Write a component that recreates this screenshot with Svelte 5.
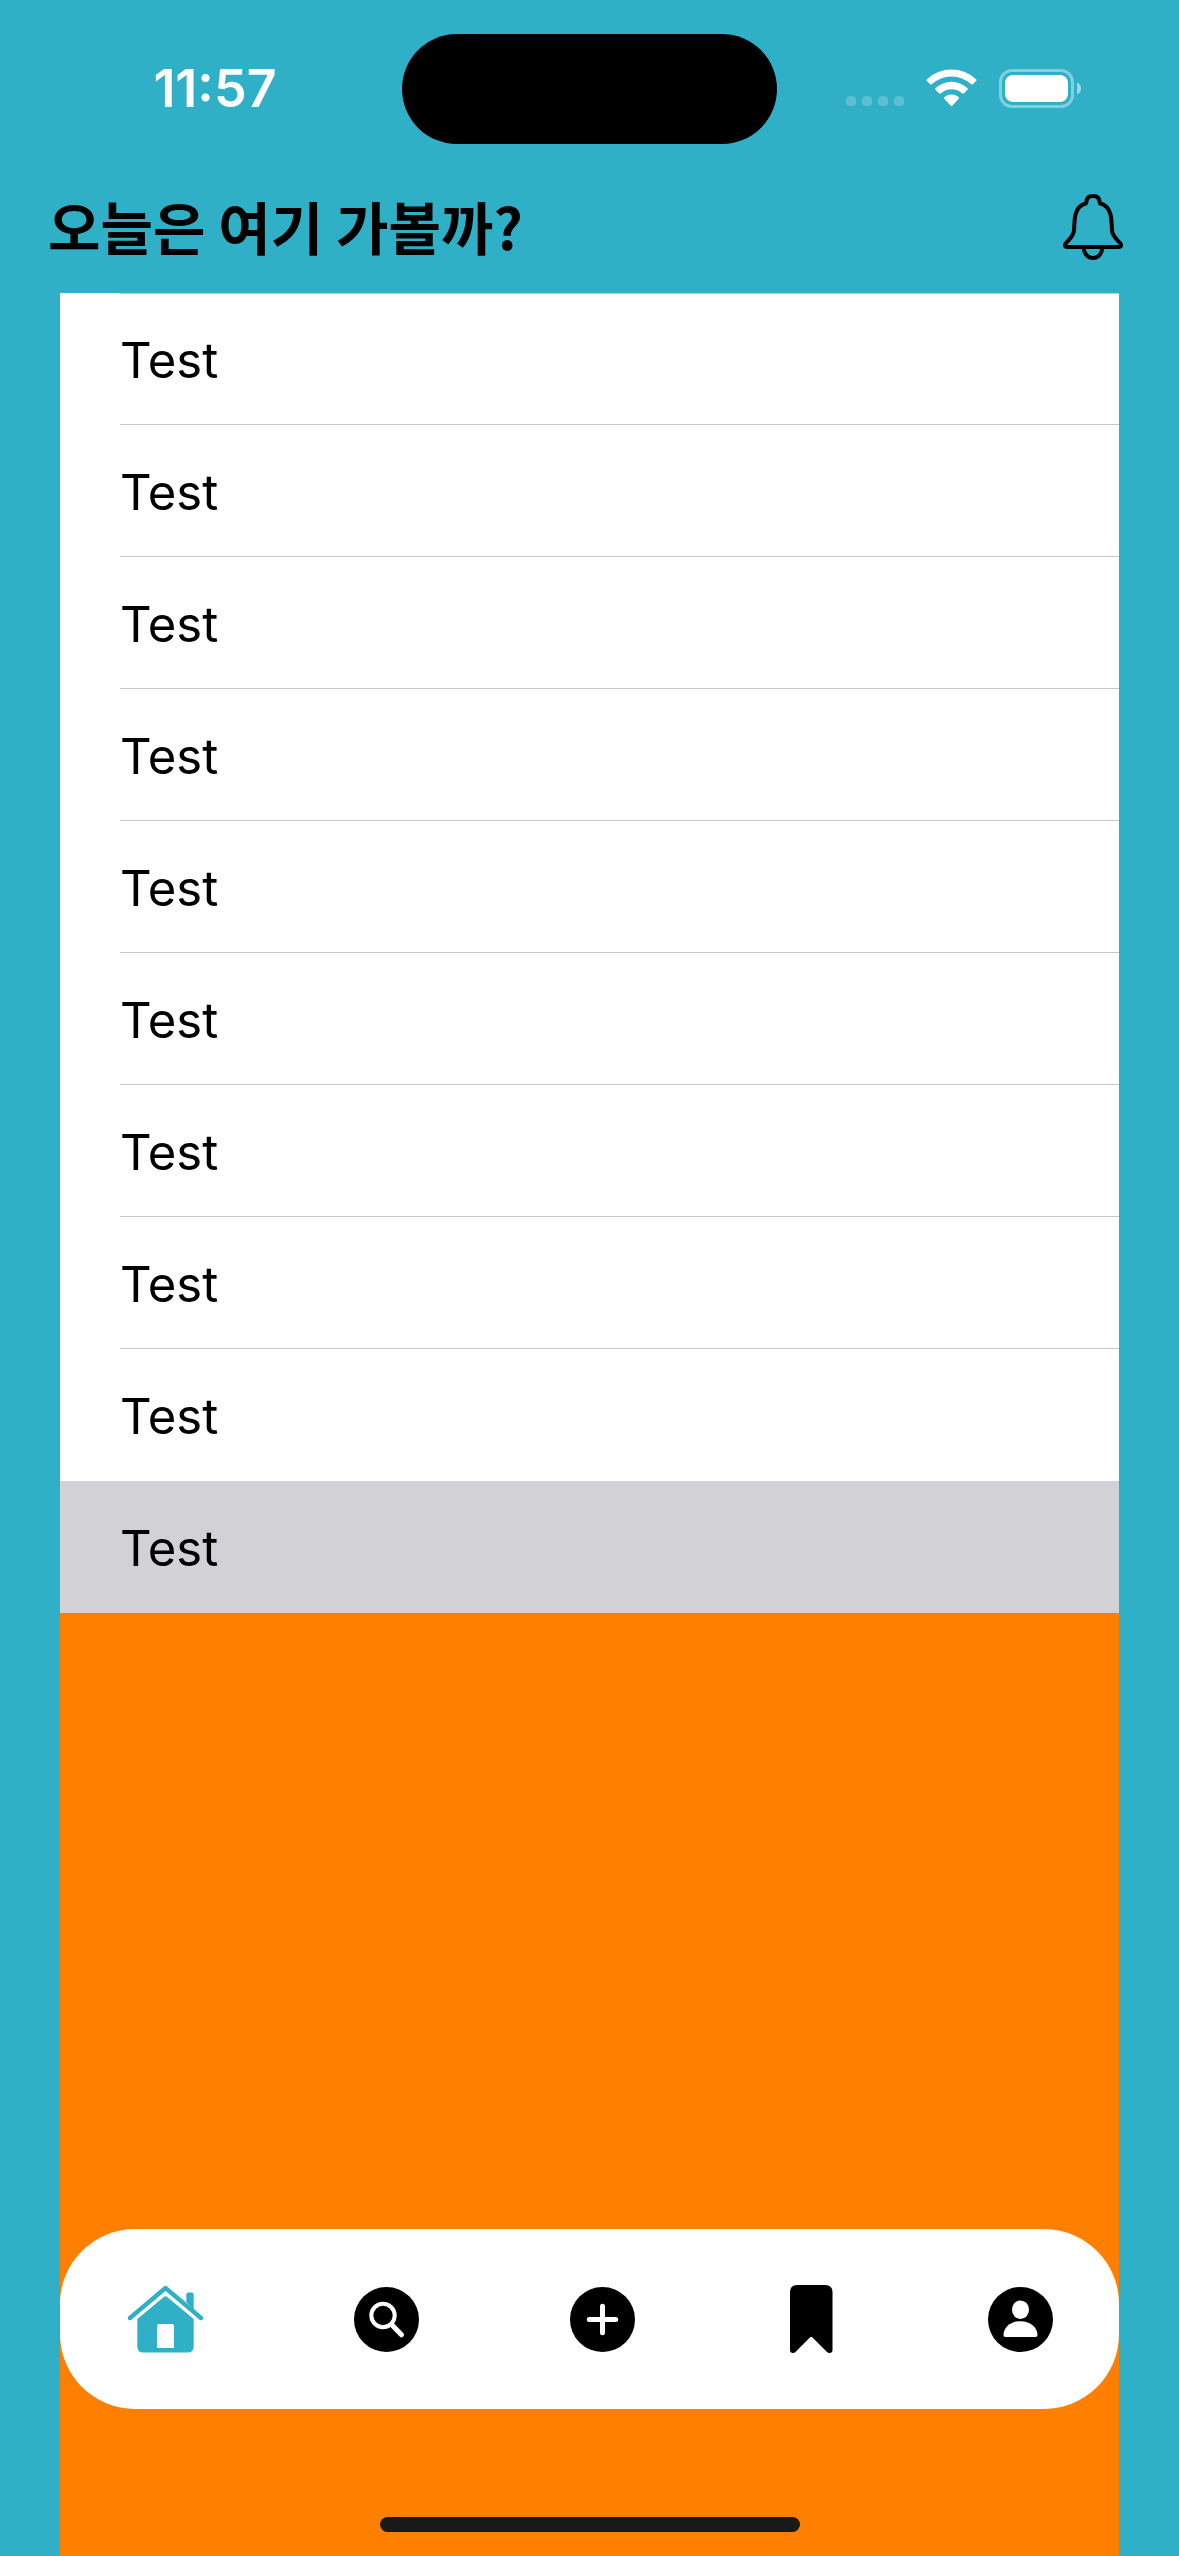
<script>
  let rows = $state(Array.from({ length: 10 }, (_, id) => ({ id, label: 'Test' })));
  let selected = $state(9);
</script>

<div class="screen">
  <div class="status">
    <div class="side left"><time>11:57</time></div>
    <div class="island"></div>
    <div class="side right">
      <svg class="dots" width="58" height="38" viewBox="0 0 58 38" aria-hidden="true">
        <rect x="0" y="27" width="10" height="10" rx="4" />
        <rect x="16" y="27" width="10" height="10" rx="4" />
        <rect x="32" y="27" width="10" height="10" rx="4" />
        <rect x="48" y="27" width="10" height="10" rx="4" />
      </svg>
      <svg class="wifi" width="51" height="38" viewBox="0 0 51 38" aria-hidden="true">
        <path d="M1 10.2 A36 36 0 0 1 50 10.2 Q51 11.2 50 12.1 L47 15.1 Q46 16 45 15.1 A28.6 28.6 0 0 0 6 15.1 Q5 16 4 15.1 L1 12.1 Q0 11.2 1 10.2Z" />
        <path d="M9.6 19 A23.4 23.4 0 0 1 41.4 19 Q42.3 19.900 41.400 20.800 L38 24.200 Q37 25.100 36 24.300 A16 16 0 0 0 15 24.300 Q14 25.100 13 24.200 L9.600 20.800 Q8.700 19.900 9.600 19Z" />
        <path d="M18.500 28 A11.500 11.500 0 0 1 32.500 28 Q33.500 29 32.500 30 L26.500 36.600 Q25.500 37.500 24.500 36.600 L18.500 30 Q17.500 29 18.500 28Z" />
      </svg>
      <svg class="battery" width="82" height="39" viewBox="0 0 82 39" aria-hidden="true">
        <rect class="shell" x="1.500" y="1.500" width="72" height="36" rx="11.500" />
        <rect x="6" y="6" width="63" height="27" rx="8" />
        <path class="nub" d="M78 13.500 Q82 15 82 19.500 Q82 24 78 25.500Z" />
      </svg>
    </div>
  </div>

  <header>
    <h1>오늘은 여기 가볼까?</h1>
    <button class="bell" aria-label="알림">
      <svg width="60" height="67" viewBox="0 0 60 67" aria-hidden="true">
        <path d="M4.500 53 H55.500 C59 53 58.500 50.500 56.500 48.500 C53 44.500 49.500 42 49 36.500 C48.500 31 49 26.500 47.500 20.500 C46 14.500 42.500 10.800 36.800 9.300 C36.800 4.500 34.500 2 30 2 S23.200 4.500 23.200 9.300 C17.500 10.800 14 14.500 12.500 20.500 C11 26.500 11.500 31 11 36.500 C10.500 42 7 44.500 3.500 48.500 C1.500 50.500 1 53 4.500 53Z" />
        <path d="M20.800 54 A9.200 10 0 0 0 39.200 54" />
      </svg>
    </button>
  </header>

  <main>
    <ul>
      {#each rows as row (row.id)}
        <li class:selected={row.id === selected}>
          <button class="row" onclick={() => (selected = row.id)}><span>{row.label}</span></button>
        </li>
      {/each}
    </ul>

    <nav>
      <button class="active" aria-label="홈">
        <svg width="75" height="68" viewBox="0 0 75 68" aria-hidden="true">
          <path d="M2 33 L37.500 3 L73 33" fill="none" stroke="currentColor" stroke-width="4.400" stroke-linecap="round" stroke-linejoin="round" />
          <path d="M58.300 17 V9.500 Q58.300 7.500 60.300 7.500 H63.700 Q65.700 7.500 65.700 9.500 V25Z" />
          <path fill-rule="evenodd" d="M9.300 34 L35.800 12 Q37.500 10.700 39.200 12 L65.700 34 V61.500 Q65.700 67.500 59.700 67.500 H15.300 Q9.300 67.500 9.300 61.500Z M31 39 Q29 39 29 41 V63 H46 V41 Q46 39 44 39Z" />
        </svg>
      </button>
      <button aria-label="검색">
        <svg width="65" height="68" viewBox="0 0 65 68" aria-hidden="true">
          <circle cx="32.500" cy="34.500" r="32.500" />
          <g class="cut">
            <circle cx="29" cy="30.500" r="11.700" />
            <path d="M38 40 L47.500 49.800" stroke-width="5" />
          </g>
        </svg>
      </button>
      <button aria-label="추가">
        <svg width="65" height="68" viewBox="0 0 65 68" aria-hidden="true">
          <circle cx="32.500" cy="34.500" r="32.500" />
          <path class="cut plus" d="M32.500 21.300 V47.700 M19.300 34.500 H45.700" />
        </svg>
      </button>
      <button aria-label="저장됨">
        <svg width="51" height="68" viewBox="0 0 51 68" aria-hidden="true">
          <path d="M4 7.500 Q4 0 11.500 0 H39 Q46.500 0 46.500 7.500 V65 Q46.500 68 43.500 68 Q42 68 41 67 L26.500 52.500 Q25.200 51.200 23.900 52.500 L9.500 67 Q8.500 68 7 68 Q4 68 4 65Z" />
        </svg>
      </button>
      <button aria-label="프로필">
        <svg width="65" height="68" viewBox="0 0 65 68" aria-hidden="true">
          <circle cx="32.500" cy="34.500" r="32.500" />
          <ellipse cx="32.500" cy="24.700" rx="8.500" ry="9.300" fill="#fff" />
          <path d="M15.500 50 C15.500 43 22 36.200 32.500 36.200 S49.500 43 49.500 50 Q49.500 52 47.500 52 H17.500 Q15.500 52 15.500 50Z" fill="#fff" />
        </svg>
      </button>
    </nav>
    <div class="indicator"></div>
  </main>
</div>

<style>
  :global(body) {
    margin: 0;
    background: #30b0c7;
  }
  .screen {
    display: flex;
    flex-direction: column;
    min-height: 100vh;
    background: #30b0c7;
    color: #000;
    font-family: Inter, 'Noto Sans CJK KR', sans-serif;
  }
  button {
    margin: 0;
    padding: 0;
    border: 0;
    background: none;
    color: inherit;
    font: inherit;
    cursor: pointer;
  }
  svg {
    display: block;
    fill: currentColor;
  }

  .status {
    display: grid;
    grid-template-columns: 1fr 375px 1fr;
    align-items: center;
    padding: 34px 0 33px;
    color: #fff;
  }
  .island {
    height: 110px;
    border-radius: 55px;
    background: #000;
  }
  .side {
    display: flex;
    align-items: center;
    justify-content: center;
  }
  .left {
    padding-left: 28px;
  }
  .right {
    gap: 22px;
    padding: 0 30px 2px 0;
  }
  time {
    font-size: 52px;
    line-height: 60px;
    font-weight: 600;
  }
  .dots {
    opacity: 0.2;
  }
  .shell {
    fill: none;
    stroke: #fff;
    stroke-width: 3;
    opacity: 0.4;
  }
  .nub {
    opacity: 0.5;
  }

  header {
    display: flex;
    align-items: center;
    justify-content: space-between;
    padding: 0 56px 16px 48px;
  }
  h1 {
    margin: 0;
    padding-bottom: 4px;
    font-family: 'Noto Sans CJK KR', sans-serif;
    font-size: 57px;
    line-height: 96px;
    font-weight: 700;
  }
  .bell svg {
    fill: none;
    stroke: #000;
    stroke-width: 4;
    stroke-linejoin: round;
  }

  main {
    flex: 1;
    display: flex;
    flex-direction: column;
    margin: 0 60px;
    background: #ff8000;
  }
  ul {
    margin: 0;
    padding: 0;
    list-style: none;
    background: #fff;
  }
  li {
    padding-left: 60px;
  }
  .row {
    display: block;
    box-sizing: border-box;
    width: 100%;
    height: 132px;
    padding-top: 4px;
    border-bottom: 1px solid #c6c6c8;
    font-size: 49px;
    line-height: 64px;
    text-align: left;
  }
  li:first-child .row {
    border-top: 1px solid #c6c6c8;
  }
  li.selected {
    background: #d1d1d6;
  }
  li.selected .row,
  li:has(+ .selected) .row {
    border-bottom-color: transparent;
  }

  nav {
    display: flex;
    align-items: center;
    justify-content: space-between;
    height: 180px;
    box-sizing: border-box;
    margin-top: auto;
    padding: 0 66px 0 68px;
    border-radius: 75px;
    background: #fff;
  }
  .active {
    color: #30b0c7;
  }
  .cut {
    fill: none;
    stroke: #fff;
    stroke-width: 4;
    stroke-linecap: round;
  }
  .plus {
    stroke-width: 5;
  }
  .indicator {
    align-self: center;
    width: 420px;
    height: 15px;
    margin: 108px 0 24px;
    border-radius: 8px;
    background: #191919;
  }
</style>
